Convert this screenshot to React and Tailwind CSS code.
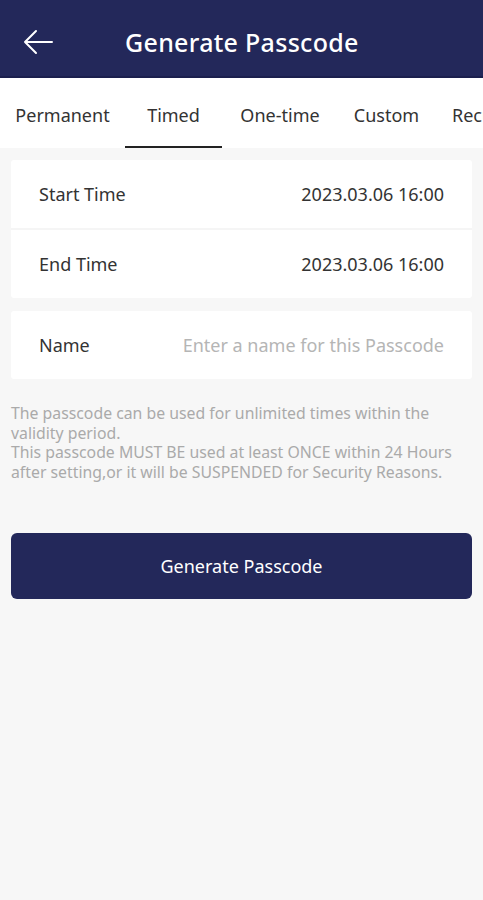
import { useState } from "react";

const tabs = [
  { name: "Permanent", w: "w-[125px]" },
  { name: "Timed", w: "w-[97px]" },
  { name: "One-time", w: "w-[116px]" },
  { name: "Custom", w: "w-[97px]" },
  { name: "Recurring", w: "w-[120px] justify-start pl-[17px]" },
];

const Row = ({ label, value, muted }) => (
  <div className="flex items-center justify-between h-[68px] pl-[28px] pr-[28px]">
    <span className="text-[18px] text-[#333]">{label}</span>
    <span className={muted ? "text-[18px] text-[#b5b5b5]" : "text-[18px] text-[#333]"}>
      {value}
    </span>
  </div>
);

const App = () => {
  const [active, setActive] = useState(1);
  return (
    <div
      className="min-h-[900px] bg-[#f7f7f7]"
      style={{ fontFamily: '"Noto Sans", Roboto, sans-serif' }}
    >
      {/* header */}
      <header className="h-[78px] bg-[#23285a] border-b-2 border-[#1b1f4d] flex items-center pt-[8px]">
        <button className="w-[76px] pl-[22px] h-full flex items-center text-white">
          <svg width="32" height="28" viewBox="0 0 32 28" fill="none">
            <path
              d="M30 14H3M14 3L3 14l11 11"
              stroke="#fff"
              strokeWidth="2"
              strokeLinecap="round"
              strokeLinejoin="round"
            />
          </svg>
        </button>
        <h1 className="ml-[49px] mt-[2px] text-[25px] text-white font-medium tracking-[0.3px]">
          Generate Passcode
        </h1>
      </header>

      {/* tabs */}
      <nav className="h-[70px] bg-white flex items-stretch overflow-hidden whitespace-nowrap">
        {tabs.map((t, i) => (
          <button
            key={t.name}
            onClick={() => setActive(i)}
            className={`relative shrink-0 flex items-center justify-center pt-[4px] text-[18px] text-[#333] ${t.w}`}
          >
            {t.name}
            {i === active && (
              <span className="absolute left-0 right-0 bottom-0 h-[2px] bg-[#222]" />
            )}
          </button>
        ))}
      </nav>

      <main className="px-[11px] pt-[12px]">
        <div className="bg-white rounded-[3px]">
          <Row label="Start Time" value="2023.03.06 16:00" />
          <div className="h-[2px] bg-[#f5f5f5]" />
          <Row label="End Time" value="2023.03.06 16:00" />
        </div>

        <div className="bg-white rounded-[3px] mt-[13px]">
          <Row label="Name" value="Enter a name for this Passcode" muted />
        </div>

        <p className="mt-[25px] text-[15.8px] leading-[19.5px] text-[#aaa]">
          The passcode can be used for unlimited times within the validity period.
          <br />
          This passcode MUST BE used at least ONCE within 24 Hours after setting,or it
          will be SUSPENDED for Security Reasons.
        </p>

        <button className="mt-[51px] w-full h-[66px] rounded-[6px] bg-[#23285a] text-white text-[18px]">
          Generate Passcode
        </button>
      </main>
    </div>
  );
};

export default App;
